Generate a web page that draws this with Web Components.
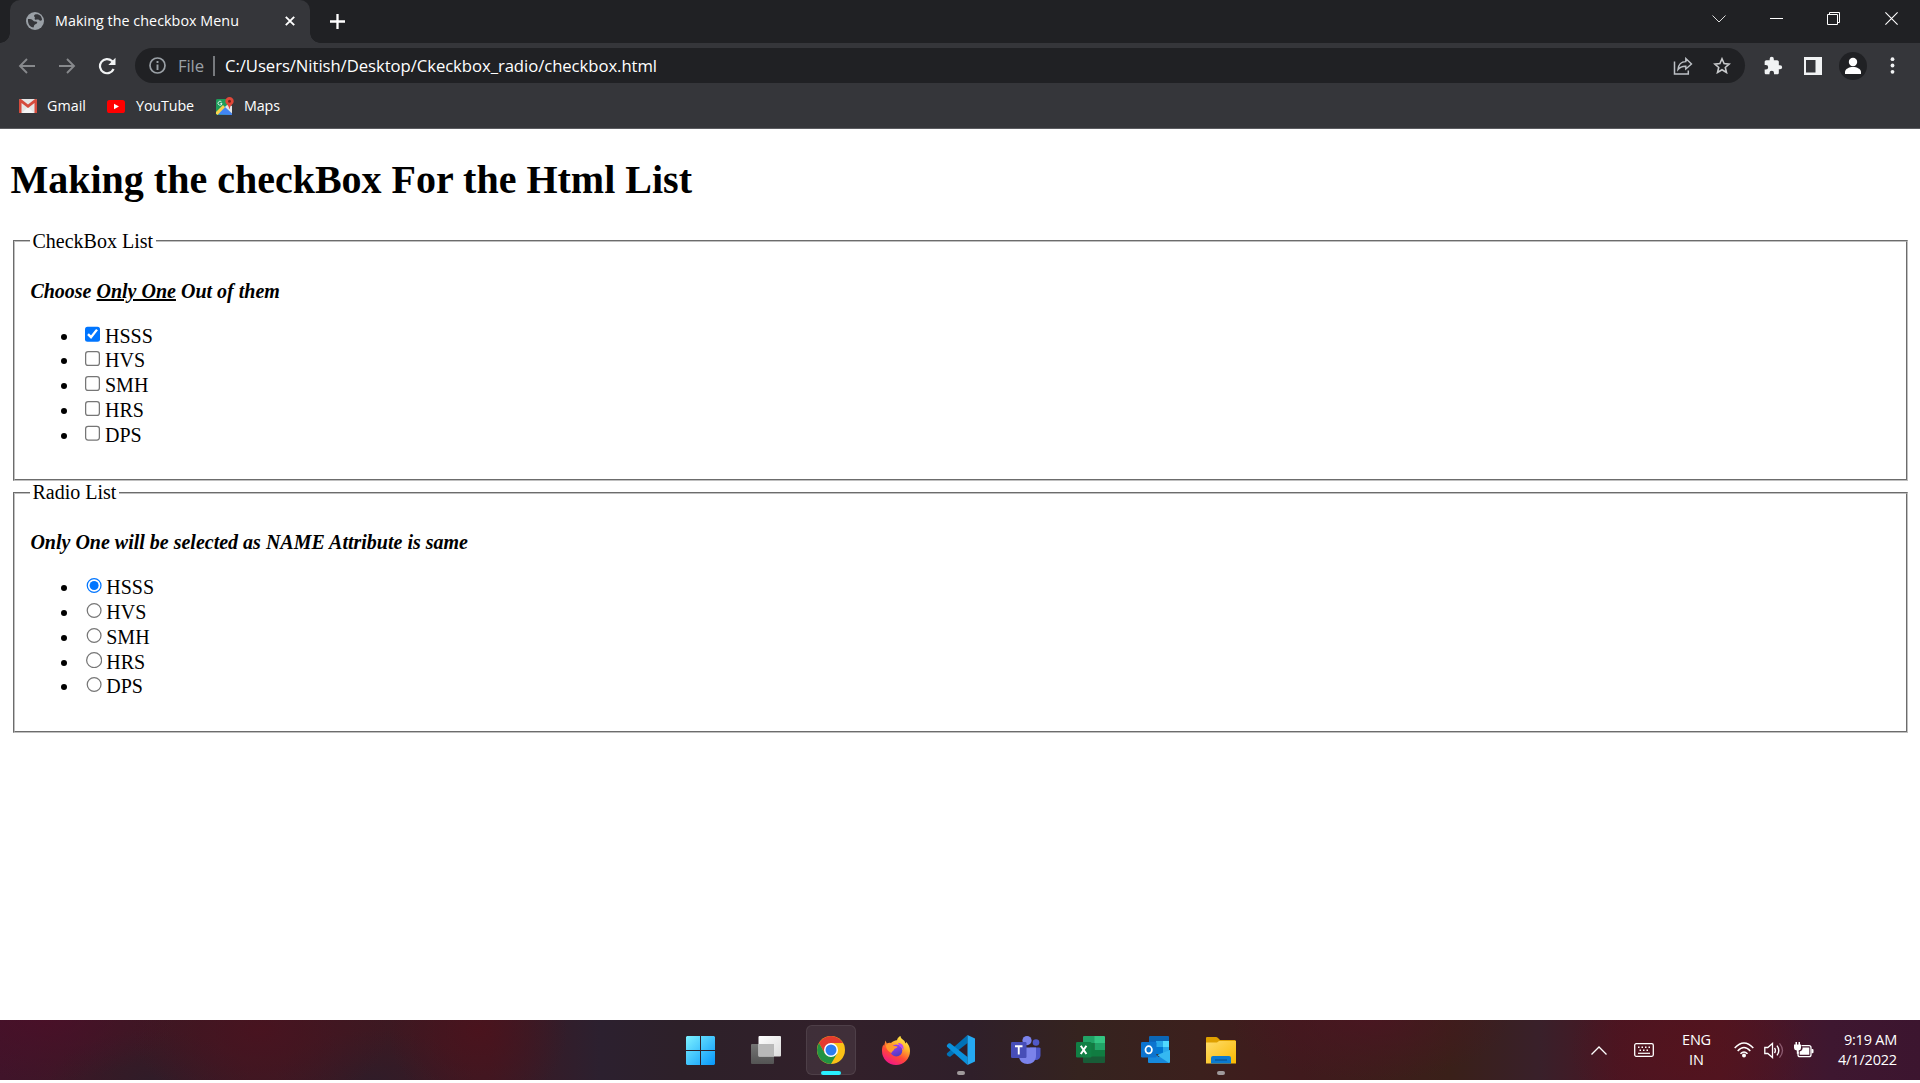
<!DOCTYPE html>
<html lang="en"><head><meta charset="utf-8"><title>Making the checkbox Menu</title>
<style>html,body{margin:0;height:1083px;overflow:hidden;background:#fff}</style></head>
<body><desktop-screen></desktop-screen>
<script>
const define=(name,html,after)=>customElements.define(name,class extends HTMLElement{
  constructor(){super();this.attachShadow({mode:'open'}).innerHTML=html}
  connectedCallback(){if(after)after(this)}
});

const icons={
globe:['0 0 18 18','<circle cx="9" cy="9" r="9" fill="#9aa0a6"/><path d="M2 7c3 0 4 0 5 1.500s3 .5 4 1.500-1 2-2 2.500-1 2-1.500 3C4 15 1.500 12 2 7zM9 2.500c-1.500 1-1 2-.3 2.600S8 7 9 7.600s3-.6 4 .4 2 .8 3 0C16 4 13 1.500 9 2.500z" fill="#35363a"/>'],
close:['0 0 10 10','<path d="M.8.8l8.400 8.400M9.200.8L.8 9.200" stroke="#fff" stroke-width="1.900"/>'],
plus:['0 0 15 15','<path d="M7.500 0v15M0 7.500h15" stroke="#fff" stroke-width="2.300"/>'],
down:['0 0 14 8','<path d="M.5.5L7 7 13.500.5" fill="none" stroke="#ddd" stroke-width="1"/>'],
min:['0 0 13 13','<path d="M0 6.500h13" stroke="#fff"/>'],
restore:['0 0 13 13','<path d="M.5 2.500h10v10H.5zM2.500 2.500V.5h10v10h-2" fill="none" stroke="#fff"/>'],
winclose:['0 0 13 13','<path d="M.4.4l12.200 12.200M12.600.4L.4 12.600" stroke="#fff" stroke-width="1.100"/>'],
back:['0 0 18 16','<path d="M17 8H2M9 1L2 8l7 7" fill="none" stroke="#87898c" stroke-width="1.900"/>'],
fwd:['0 0 18 16','<path d="M1 8h15M9 1l7 7-7 7" fill="none" stroke="#87898c" stroke-width="1.900"/>'],
reload:['0 0 18 18','<path d="M15.600 12A7.100 7.100 0 1 1 14 4l1.500 1.500" fill="none" stroke="#f1f3f4" stroke-width="2.200"/><path d="M17.500.800V8h-7.200z" fill="#f1f3f4"/>'],
info:['0 0 17 17','<circle cx="8.500" cy="8.500" r="7.500" fill="none" stroke="#9aa0a6" stroke-width="1.700"/><path d="M8.500 7.400V13M8.500 4v2" stroke="#9aa0a6" stroke-width="1.900"/>'],
share:['0 0 20 18','<path d="M1.500 4.500V17h13.800v-3.500" fill="none" stroke="#bdc1c6" stroke-width="1.500"/><path d="M5 12.500C5.500 7 9 4.600 12.800 4.600V1.500L18.500 7l-5.700 5V9.200C9 9 7 10 5 12.500z" fill="none" stroke="#bdc1c6" stroke-width="1.400"/>'],
star:['0 0 18 17','<path d="M9 1.800l2.100 4.800 5.100.5-3.900 3.400 1.200 5L9 12.800l-4.500 2.700 1.200-5L1.800 7.100l5.100-.5z" fill="none" stroke="#c8cacc" stroke-width="1.600"/>'],
puzzle:['0 0 24 24','<path d="M20.500 11H19V7c0-1.100-.9-2-2-2h-4V3.500a2.500 2.500 0 0 0-5 0V5H4c-1.100 0-2 .9-2 2v3.800h1.500a2.700 2.700 0 0 1 0 5.400H2V20c0 1.100.9 2 2 2h3.800v-1.500a2.700 2.700 0 0 1 5.400 0V22H17c1.100 0 2-.9 2-2v-4h1.500a2.500 2.500 0 0 0 0-5z" fill="#f1f3f4"/>'],
panel:['0 0 18 18','<path fill="#f1f3f4" fill-rule="evenodd" d="M0 0h18v18H0zM2 3h9.500v12.500H2z"/>'],
avatar:['0 0 28 28','<circle cx="14" cy="14" r="14" fill="#202124"/><circle cx="14" cy="10" r="4.200" fill="#fff"/><path d="M6 22v-2c0-3 4-5 8-5s8 2 8 5v2z" fill="#fff"/>'],
dots:['0 0 5 17','<g fill="#f1f3f4"><circle cx="2.500" cy="2.200" r="1.900"/><circle cx="2.500" cy="8.500" r="1.900"/><circle cx="2.500" cy="14.800" r="1.900"/></g>'],
gmail:['0 0 18 14','<rect width="18" height="14" rx="1.500" fill="#e5e5e5"/><path d="M3 14l6-6 6 6z" fill="#f5f5f5"/><path d="M0 14V1.500C0 .5.500 0 1.500 0H2l7 5.500L16 0h.5c1 0 1.500.5 1.500 1.500V14h-2.500V4L9 9 2.500 4v10z" fill="#d54b3d"/>'],
youtube:['0 0 18 13','<rect width="18" height="13" rx="2.600" fill="#f00"/><path d="M7 3.700l5 2.800-5 2.800z" fill="#fff"/>'],
maps:['0 0 18 18','<path d="M0 3.500C0 2.500.500 2 1.500 2H14v16H1.500C.500 18 0 17.500 0 16.500z" fill="#1e9c5a"/><path d="M1 17.500L9 9l7 7.500V18z" fill="#4285f4"/><path d="M1.500 18L9 10.300 7 8 0 15v1.500z" fill="#fbd34b"/><path d="M9 10l3-3 4 2v7.500z" fill="#e1e5e8"/><path d="M5.600 5A2 2 0 1 0 6 6.500H4.300" fill="none" stroke="#e8f5ee" stroke-width=".9"/><path d="M13.500 0a4.200 4.200 0 0 1 4.200 4.200c0 3-3.700 3.800-4 7.800h-.4c-.3-4-4-4.800-4-7.800A4.200 4.200 0 0 1 13.500 0z" fill="#df4839"/><circle cx="13.500" cy="4.200" r="1.500" fill="#79251e"/>'],
windows:['0 0 29 29','<defs><linearGradient id="g" x2="1" y2="1"><stop stop-color="#7df1ff"/><stop offset="1" stop-color="#0797fa"/></linearGradient></defs><path fill="url(#g)" d="M1 0h13v14H0V1zM15 0h13l1 1v13H15zM0 15h14v14H1l-1-1zM15 15h14v13l-1 1H15z"/>'],
taskview:['0 0 30 28','<defs><linearGradient id="g" x2="1" y2="1"><stop stop-color="#fff"/><stop offset="1" stop-color="#dcdcdc"/></linearGradient><linearGradient id="h" x2="0" y2="1"><stop stop-color="#747474"/><stop offset="1" stop-color="#545454"/></linearGradient></defs><rect y="8" width="23" height="20" rx="1" fill="url(#h)"/><rect x="7.500" width="22.500" height="20.500" rx="1" fill="url(#g)"/><path d="M7.500 8H23v12.500H7.500z" fill="#b9b9b9"/>'],
chrome:['0 0 28 28','<circle cx="14" cy="14" r="14" fill="#fbc116"/><path d="M1.900 7A14 14 0 0 1 26.100 7H14l-6 10.500z" fill="#e33b2e"/><path d="M1.900 7A14 14 0 0 0 14 28l6.100-10.500H8z" fill="#229342"/><circle cx="14" cy="14" r="7" fill="#fff"/><circle cx="14" cy="14" r="5.500" fill="#2d7df0"/>'],
firefox:['0 0 28 29','<defs><linearGradient id="g" x1=".85" y1="0" x2=".3" y2="1"><stop stop-color="#fff44f"/><stop offset=".35" stop-color="#ffb42b"/><stop offset=".65" stop-color="#ff4b35"/><stop offset="1" stop-color="#f0148b"/></linearGradient><linearGradient id="h" x2=".4" y2="1"><stop stop-color="#a63dff"/><stop offset="1" stop-color="#533cc0"/></linearGradient></defs><path d="M3.500 4.500l1.300 3C6 6.800 7.500 6.700 9 7c3-3 5-2 6-3 .7-2 2-3.600 3.500-4 0 2.500 2 3.200 4 5l1 2.500 1-1.500c3 4 3.500 6 3.500 9A14 14 0 0 1 0 15c0-2 0-4 1.500-6.500L2 10z" fill="url(#g)"/><circle cx="14.300" cy="14.500" r="6" fill="url(#h)"/><path d="M4 9c3-1.500 6-1 7.500.8l4 .7c0 1.500-2 1.500-3.200 2.500-.6 2-2 2-3 4C6 15 4 13 4 9z" fill="#ff9a2b"/><path d="M16 7c4 0 6 2.500 5.500 7-1-2-2.500-3-4-3.500z" fill="#ba48f0"/>'],
vscode:['0 0 30 30','<path d="M21.500 0v8L4.500 21.500C3 22.500 0 20 1 18.300z" fill="#0072b7"/><path d="M21.500 30v-8L4.500 8.500C3 7.500 0 10 1 11.700z" fill="#0a91dc"/><path d="M21.500 0L29 3.500v23L21.500 30z" fill="#25a9f2"/>'],
teams:['0 0 30 28','<circle cx="25" cy="6.500" r="3.300" fill="#5059c9"/><path d="M19 11.500h9.500l1 1V19c0 3-2 5-5 5h-5z" fill="#4c56c8"/><circle cx="16" cy="4.600" r="4.600" fill="#7b83eb"/><path d="M8 11.500h17V20c0 5-4 8-8.500 8S8 25 8 20z" fill="#7b83eb"/><rect y="6" width="15.500" height="16" rx="1.200" fill="#474eb8"/><path d="M4 10.300h7.500M7.750 10.300V18.500" stroke="#fff" stroke-width="1.900"/>'],
excel:['0 0 30 28','<path d="M7 1q0-1 1-1h11v7H7z" fill="#21a366"/><path d="M18.500 0H28q1 0 1 1v6H18.500z" fill="#33c481"/><path d="M7 7h11.500v7H7z" fill="#107c41"/><path d="M18.500 7H29v7H18.500z" fill="#21a366"/><path d="M7 14h22v7H7z" fill="#107c41"/><path d="M7 20.500h22V26q0 1-1 1H8q-1 0-1-1z" fill="#185c37"/><rect y="6" width="15.500" height="15.500" rx="1.200" fill="#118045"/><path d="M4.800 9.800l5.600 8.200M10.400 9.800L4.800 18" stroke="#fff" stroke-width="2"/>'],
outlook:['0 0 30 28','<path d="M8 1q0-1 1-1h18q1 0 1 1v14H8z" fill="#0b66b5"/><path d="M8 5h7v12H8z" fill="#0a66c0"/><path d="M15 5h7v6h-7z" fill="#28a8ea"/><path d="M22 5h6v6h-6z" fill="#50d9ff"/><path d="M15 11h7v7h-7z" fill="#0078d4"/><path d="M22 11h6v6h-6z" fill="#28a8ea"/><path d="M7 14l11 7 11-7v12q0 1-1 1H8q-1 0-1-1z" fill="#1689dc"/><path d="M29 14v12l-1 1L16 19z" fill="#35b8f1"/><rect y="6" width="15.500" height="15.500" rx="1.200" fill="#0c74cf"/><ellipse cx="7.700" cy="13.800" rx="3.200" ry="3.600" fill="none" stroke="#fff" stroke-width="1.800"/>'],
folder:['0 0 30 27','<defs><linearGradient id="g" x2="1" y2="1"><stop stop-color="#ffdc6b"/><stop offset="1" stop-color="#f9b900"/></linearGradient></defs><path d="M0 1q0-1 1-1h9q1 0 2 1l2 2h15l1 1v5H0z" fill="#dfa000"/><path d="M0 5.500h11l2-1.500h17v22.500H0z" fill="url(#g)"/><path d="M5 26.500V21q0-2 2-2h16q2 0 2 2v5.500z" fill="#0b7ad0"/><path d="M9 23h12" stroke="#0a5391" stroke-width="1.200"/>'],
up:['0 0 16 9','<path d="M.5 8.500L8 1l7.500 7.500" fill="none" stroke="#fff" stroke-width="1.300"/>'],
keyboard:['0 0 20 14','<rect x=".7" y=".7" width="18.600" height="12.600" rx="1.500" fill="none" stroke="#fff" stroke-width="1.300"/><path d="M4 4.300h13" stroke="#fff" stroke-width="1.500" stroke-dasharray="1.500 2"/><path d="M5.500 7.300h10" stroke="#fff" stroke-width="1.500" stroke-dasharray="1.500 2"/><path d="M4 10.300h12" stroke="#fff" stroke-width="1.200"/>'],
wifi:['0 0 20 16','<g fill="none" stroke="#fff" stroke-width="1.500"><path d="M.7 6Q10-3.800 19.300 6"/><path d="M3.700 9Q10 2 16.300 9"/><path d="M6.500 11.800q3.500-3.600 7 0"/></g><circle cx="10" cy="13.500" r="2" fill="#fff"/>'],
speaker:['0 0 20 17','<path d="M.8 5.500h3L8.500 1.500v14L3.800 11.500h-3z" fill="none" stroke="#fff" stroke-width="1.300"/><path d="M10.500 6q1.800 2.500 0 5M13 3.600q3.600 4.900 0 9.800" fill="none" stroke="#fff" stroke-width="1.400"/><path d="M15.500 1.300q6 7.200 0 14.400" fill="none" stroke="#8c5b70" stroke-width="1.300"/>'],
battery:['0 0 20 16','<path d="M7.500 3.700H15q2 0 2 2v7q0 2-2 2H6q-2 0-2-2V10" fill="none" stroke="#fff" stroke-width="1.300"/><path d="M8.500 5.500h6.800v7.300H5.700V9.500q2-.5 2.800-2.500zM17.500 7h1q1 0 1 1v2.300q0 1-1 1h-1zM0 2.500h1.500V0H3v2.500h1.500V0H6v2.500h1V6q0 2-2.300 2.500v3.200H2.800V8.500Q0 8 0 6z" fill="#fff"/>']
};
define('ui-icon','<style>:host{display:block;flex:none}svg{display:block;width:100%;height:100%}</style><svg></svg>',el=>{
  const [box,body]=icons[el.getAttribute('name')],[,,w,h]=box.split(' ');
  const svg=el.shadowRoot.querySelector('svg');
  svg.setAttribute('viewBox',box);svg.innerHTML=body;
  const size=+el.getAttribute('size')||+w;
  el.style.width=size+'px';el.style.height=size*h/w+'px';
  if(el.hasAttribute('gap'))el.style.marginLeft=el.getAttribute('gap')+'px';
});
/* label whose tracking is tuned so that the text fills a given width */
define('ui-label','<style>:host{display:block;flex:none;white-space:nowrap}</style><span><slot></slot></span>',el=>{
  const w=+el.getAttribute('fit');
  if(el.hasAttribute('gap'))el.style.marginLeft=el.getAttribute('gap')+'px';
  requestAnimationFrame(()=>{
    const s=el.shadowRoot.querySelector('span'),n=el.textContent.length;
    const d=(w-s.getBoundingClientRect().width)/n;
    s.style.letterSpacing=d+'px';el.style.width=w+'px';
  });
});
define('tab-strip',`<style>
:host{display:flex;height:43px;background:#202124;color:#fff;font:14.3px/20px "Open Sans",sans-serif;align-items:center}
.tab{box-sizing:border-box;height:43px;width:300px;margin-left:10px;padding:0 15px 1px 16px;background:#35363a;border-radius:10px 10px 0 0;display:flex;align-items:center}
.foot{align-self:flex-end;width:10px;height:10px;background:radial-gradient(circle at 100% 0,#202124 9.500px,#35363a 10px)}
.foot.left{margin:0 -10px 0 0;background:radial-gradient(circle at 0 0,#202124 9.500px,#35363a 10px)}
.win{margin-left:auto;padding-right:22px;display:flex;align-items:center;padding-bottom:6px}
ui-icon[name=close]{margin-left:auto}
</style><i class="foot left"></i><div class="tab"><ui-icon name="globe"></ui-icon><ui-label gap="11" fit="184">Making the checkbox Menu</ui-label><ui-icon name="close"></ui-icon></div><i class="foot"></i><ui-icon name="plus" gap="10"></ui-icon>
<div class="win"><ui-icon name="down"></ui-icon><ui-icon name="min" gap="44"></ui-icon><ui-icon name="restore" gap="44"></ui-icon><ui-icon name="winclose" gap="45"></ui-icon></div>`);
define('tool-bar',`<style>
:host{display:flex;height:45px;box-sizing:border-box;padding:0 25px 0 18px;align-items:center;background:#35363a;color:#fff;font:16.700px/24px "Open Sans",sans-serif}
.omni{display:flex;align-items:center;box-sizing:border-box;flex:1;height:35px;margin:0 18px 0 19px;border-radius:18px;background:#202124;padding:0 14px 0 14px}
.file{color:#9aa0a6}.bar{width:2px;height:20px;background:#777a7e;margin:0 10px 0 9px}.grow{flex:1}
</style><ui-icon name="back"></ui-icon><ui-icon name="fwd" gap="22"></ui-icon><ui-icon name="reload" gap="22"></ui-icon>
<div class="omni"><ui-icon name="info"></ui-icon><ui-label class="file" gap="12" fit="26">File</ui-label><i class="bar"></i><ui-label fit="432">C:/Users/Nitish/Desktop/Ckeckbox_radio/checkbox.html</ui-label><i class="grow"></i><ui-icon name="share"></ui-icon><ui-icon name="star" gap="20"></ui-icon></div>
<ui-icon name="puzzle" size="20"></ui-icon><ui-icon name="panel" gap="21"></ui-icon><ui-icon name="avatar" gap="17"></ui-icon><ui-icon name="dots" gap="23"></ui-icon>`);
define('bookmark-bar',`<style>
:host{display:flex;box-sizing:border-box;height:41px;padding:0 19px 4px;align-items:center;background:#35363a;border-bottom:1px solid #5b5c60;color:#fff;font:14.300px/20px "Open Sans",sans-serif}
</style><ui-icon name="gmail"></ui-icon><ui-label gap="10" fit="39">Gmail</ui-label><ui-icon name="youtube" gap="21"></ui-icon><ui-label gap="11" fit="58">YouTube</ui-label><ui-icon name="maps" gap="22"></ui-icon><ui-label gap="10" fit="36">Maps</ui-label>`);
define('choice-group',`<style>
:host{display:block}
fieldset{border:2px groove rgb(192,192,192);padding-left:12.400px}
legend{padding:0 2px 0 2px}
p{font-weight:bold;font-style:italic;margin:16px 0;padding-left:.3px}ul{margin:16px 0;padding-left:40px}li{height:19.800px}
</style><fieldset><legend></legend><p><slot></slot></p><ul></ul></fieldset>`,el=>{
  const r=el.shadowRoot,type=el.getAttribute('type');
  r.querySelector('legend').textContent=el.getAttribute('legend');
  r.querySelector('ul').innerHTML=['HSSS','HVS','SMH','HRS','DPS'].map((t,i)=>`<li><input type="${type}" name="school"${i?'':' checked'}>${t}</li>`).join('');
});
define('web-page',`<style>
:host{display:flow-root;flex:1;background:#fff;color:#000;font-family:"Liberation Serif",serif}
main{display:flow-root;zoom:1.25;padding:0 8px;font-size:16px}
h1{font-size:32px;margin:21.440px 0;padding-left:.4px}
choice-group+choice-group{margin-top:.4px}
</style><main><h1>Making the checkBox For the Html List</h1>
<choice-group type="checkbox" legend="CheckBox List">Choose <u>Only One</u> Out of them</choice-group>
<choice-group type="radio" legend="Radio List">Only One will be selected as NAME Attribute is same</choice-group></main>`);
define('task-app',`<style>
:host{display:flex;width:65px;height:60px;justify-content:center;align-items:center}
div{box-sizing:border-box;width:50px;height:50px;border-radius:6px;display:grid;place-items:center;border:1px solid transparent;padding-top:3px;grid-template-rows:42px 4px}
:host([active]) div{background:#ffffff12;border-color:#ffffff14}
i{height:4px;border-radius:2px}:host([open]) i{width:8px;background:#a09a9c}:host([active]) i{width:20px;background:#29efff}
</style><div><slot></slot><i></i></div>`);
define('task-bar',`<style>
:host{display:flex;height:60px;color:#fff;font:14.500px/20px "Open Sans",sans-serif;padding-left:668px;background:
radial-gradient(ellipse 130px 60px at 45px 0,#4b0f28cc,#4b0f2800),
radial-gradient(ellipse 130px 80px at 260px 10px,#4b121fcc,#4b121f00),
radial-gradient(ellipse 90px 80px at 478px 10px,#4d121ccc,#4d121c00),
radial-gradient(ellipse 100px 50px at 150px 60px,#301c28,#301c2800),
radial-gradient(ellipse 100px 50px at 375px 60px,#301c28,#301c2800),
radial-gradient(ellipse 140px 60px at 1370px 0,#4b1522cc,#4b152200),
radial-gradient(ellipse 120px 80px at 1690px 30px,#54131dcc,#54131d00),
linear-gradient(90deg,#40142a 0,#3c1824 120px,#3c1922 350px,#3d1822 490px,#2c202f 600px,#2d2029 680px,#32202a 850px,#2f1f2a 970px,#35231f 1080px,#3c201d 1200px,#401a1d 1300px,#3a2019 1450px,#39202a 1540px,#4a1522 1620px,#501521 1720px,#3e1730 1830px,#3c152f 100%)}
.tray{margin-left:auto;display:flex;align-items:center;padding-right:23px}
.stack{display:flex;flex-direction:column}.lang{align-items:center;margin-left:28px}.clock{align-items:flex-end;margin-left:24px}
</style>
<task-app><ui-icon name="windows"></ui-icon></task-app><task-app><ui-icon name="taskview"></ui-icon></task-app><task-app active><ui-icon name="chrome"></ui-icon></task-app><task-app><ui-icon name="firefox"></ui-icon></task-app><task-app open><ui-icon name="vscode"></ui-icon></task-app><task-app><ui-icon name="teams"></ui-icon></task-app><task-app><ui-icon name="excel"></ui-icon></task-app><task-app><ui-icon name="outlook"></ui-icon></task-app><task-app open><ui-icon name="folder"></ui-icon></task-app>
<div class="tray"><ui-icon name="up"></ui-icon><ui-icon name="keyboard" gap="27"></ui-icon><div class="stack lang"><ui-label fit="29">ENG</ui-label><ui-label fit="15">IN</ui-label></div><ui-icon name="wifi" gap="23"></ui-icon><ui-icon name="speaker" gap="10"></ui-icon><ui-icon name="battery" gap="10"></ui-icon><div class="stack clock"><ui-label fit="53">9:19 AM</ui-label><ui-label fit="59">4/1/2022</ui-label></div></div>`);
define('desktop-screen',`<style>:host{display:flex;flex-direction:column;width:1920px;height:1080px}</style>
<tab-strip></tab-strip><tool-bar></tool-bar><bookmark-bar></bookmark-bar><web-page></web-page><task-bar></task-bar>`);
</script></body></html>
